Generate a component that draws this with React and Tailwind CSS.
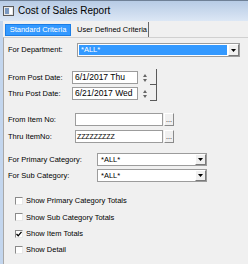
import React from "react";

function WinIcon() {
  return (
    <svg width="11" height="10" viewBox="0 0 11 10" className="shrink-0">
      <rect x="0.5" y="0.5" width="10" height="9" fill="#e8e8e8" stroke="#5a5a5a" />
      <rect x="2" y="2" width="4" height="6" fill="#7a98c0" />
      <rect x="6.5" y="2" width="2.5" height="6" fill="#ffffff" />
    </svg>
  );
}

function Arrow() {
  return (
    <svg width="5" height="3" viewBox="0 0 5 3">
      <path d="M0 0 H5 L2.5 3 Z" fill="#000" />
    </svg>
  );
}

function Combo({ width, blue, text }) {
  return (
    <div className={`${width} h-full flex items-stretch border border-[#9c9c9c] bg-white`}>
      <div className={`flex-1 flex items-center m-[1px] pl-[2px] text-[7.5px] ${blue ? "bg-[#3399ff] text-white" : "text-black"}`}>
        {text}
      </div>
      <div className="w-[11px] flex items-center justify-center bg-[#f0f0f0] border-l border-t border-white border-r border-b border-r-[#7a7a7a] border-b-[#7a7a7a]">
        <Arrow />
      </div>
    </div>
  );
}

function Spin() {
  return (
    <div className="ml-[3px] w-[7px] h-full flex flex-col items-center justify-center gap-[2px]">
      <svg width="4" height="3" viewBox="0 0 4 3"><path d="M0 3 L2 0 L4 3 Z" fill="#666" /></svg>
      <svg width="4" height="3" viewBox="0 0 4 3"><path d="M0 0 H4 L2 3 Z" fill="#666" /></svg>
    </div>
  );
}

function Check({ checked, label }) {
  return (
    <div className="h-[16.3px] flex items-center">
      <div className="ml-[7px] w-[8px] h-[8px] bg-white border border-t-[#8a8a8a] border-l-[#8a8a8a] border-r-[#e8e8e8] border-b-[#e8e8e8] flex items-center justify-center">
        {checked && (
          <svg width="6" height="6" viewBox="0 0 6 6">
            <path d="M0.5 3 L2.2 4.8 L5.5 0.8" stroke="#000" strokeWidth="1.3" fill="none" />
          </svg>
        )}
      </div>
      <span className="ml-[3px] text-[7.5px] leading-none">{label}</span>
    </div>
  );
}

export default function App() {
  return (
    <div className="w-[248px] h-[264px] bg-[#f0f0f0] overflow-hidden flex flex-col text-black font-['Liberation_Sans',Arial,sans-serif]">
      <div className="h-[21px] shrink-0 flex items-center border-t border-[#6f8096] bg-linear-to-b from-[#b7cbe5] to-[#dce7f5]">
        <div className="ml-[3px]"><WinIcon /></div>
        <span className="ml-[4px] text-[10px] leading-none">Cost of Sales Report</span>
      </div>
      <div className="flex-1 flex">
        <div className="w-[3px] bg-[#c3d6ee]" />
        <div className="flex-1 flex flex-col">
          <div className="h-[16px] flex items-end">
            <div className="w-[70px] h-[15px] flex items-center justify-center">
              <span className="h-[12px] w-[66px] flex items-center justify-center bg-[#3399ff] border border-[#1c7ee6] text-white text-[7.5px] leading-none">
                Standard Criteria
              </span>
            </div>
            <div className="w-[76px] h-[15px] flex items-center pl-[4px] border-r border-[#6a6a6a] text-[7.5px] leading-none whitespace-nowrap">
              User Defined Criteria
            </div>
          </div>
          <div className="flex-1 flex flex-col border-t border-l border-t-[#d0d0d0] border-l-[#a8a8a8] pl-[4px]">
            <div className="mt-[5px] h-[14px] flex items-center">
              <span className="w-[69px] text-[7.5px] leading-none">For Department:</span>
              <Combo width="w-[163px]" blue text="*ALL*" />
            </div>

            <div className="mt-[14px] h-[13px] flex">
              <span className="w-[64px] self-center text-[7.5px] leading-none">From Post Date:</span>
              <div className="w-[66px] h-full flex items-center pl-[2px] bg-white border border-[#9c9c9c] text-[8.5px] leading-none">6/1/2017 Thu</div>
              <Spin />
              <div className="ml-[2px] w-[7px] h-[16px] self-end mb-[-1px] border-r border-b border-[#5a5a5a]" />
            </div>
            <div className="mt-[3px] h-[13px] flex">
              <span className="w-[64px] self-center text-[7.5px] leading-none">Thru Post Date:</span>
              <div className="w-[66px] h-full flex items-center pl-[2px] bg-white border border-[#9c9c9c] text-[8.5px] leading-none">6/21/2017 Wed</div>
              <Spin />
              <div className="ml-[2px] w-[7px] h-[16px] self-end mb-[-1px] border-r border-b border-[#5a5a5a]" />
            </div>

            <div className="mt-[13px] h-[13px] flex">
              <span className="w-[67px] self-center text-[7.5px] leading-none">From Item No:</span>
              <div className="w-[88px] h-full bg-white border border-[#9c9c9c]" />
              <div className="ml-[1px] w-[10px] h-full flex items-end justify-center pb-[2px] bg-[#f0f0f0] border border-t-white border-l-white border-r-[#8a8a8a] border-b-[#8a8a8a] text-[7px] leading-none">...</div>
            </div>
            <div className="mt-[4px] h-[13px] flex">
              <span className="w-[67px] self-center text-[7.5px] leading-none">Thru ItemNo:</span>
              <div className="w-[88px] h-full flex items-center pl-[1px] bg-white border border-[#9c9c9c] text-[7px] leading-none tracking-[-0.1px]">ZZZZZZZZZ</div>
              <div className="ml-[1px] w-[10px] h-full flex items-end justify-center pb-[2px] bg-[#f0f0f0] border border-t-white border-l-white border-r-[#8a8a8a] border-b-[#8a8a8a] text-[7px] leading-none">...</div>
            </div>

            <div className="mt-[10px] h-[13px] flex items-center">
              <span className="w-[89px] text-[7.5px] leading-none">For Primary Category:</span>
              <Combo width="w-[110px]" text="*ALL*" />
            </div>
            <div className="mt-[3px] h-[13px] flex items-center">
              <span className="w-[89px] text-[7.5px] leading-none">For Sub Category:</span>
              <Combo width="w-[110px]" text="*ALL*" />
            </div>

            <div className="mt-[11px] flex flex-col">
              <Check label="Show Primary Category Totals" />
              <Check label="Show Sub Category Totals" />
              <Check checked label="Show Item Totals" />
              <Check label="Show Detail" />
            </div>
          </div>
        </div>
      </div>
    </div>
  );
}
